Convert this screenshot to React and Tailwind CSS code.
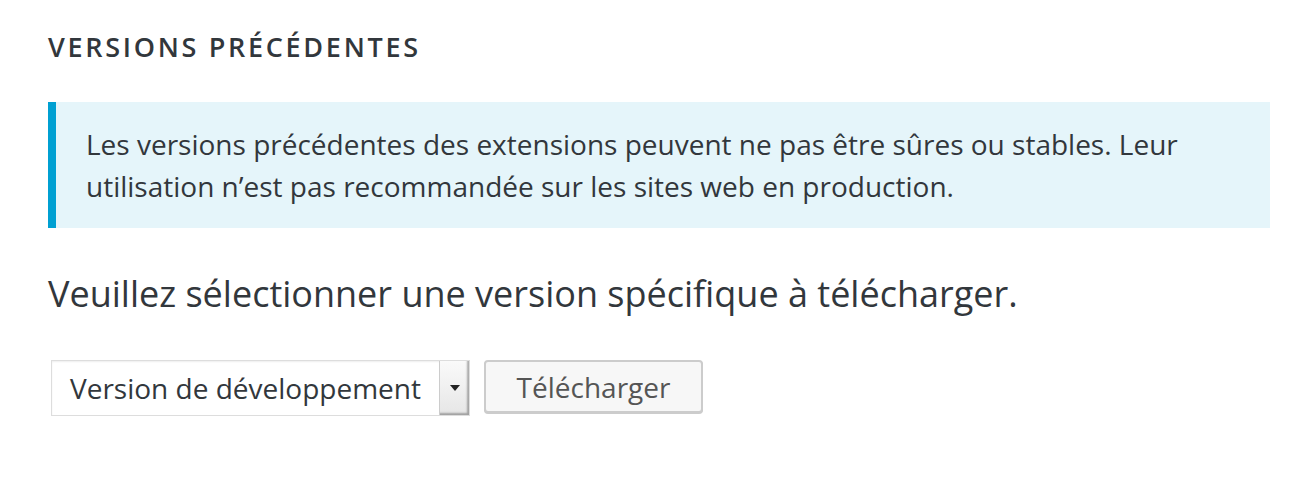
export default function App() {
  return (
    <div className="min-h-[486px] bg-white pl-12 pr-[30px] pt-[30px]" style={{ fontFamily: '"Open Sans", sans-serif' }}>
      <h2 className="text-[27px] font-semibold uppercase tracking-[0.1em] leading-[34px] text-[#32373c]">
        Versions précédentes
      </h2>

      <div className="mt-[38px] border-l-[8px] border-[#00a0d2] bg-[#e5f5fa] py-[21px] pl-[30px] pr-6">
        <p className="text-[28px] leading-[42px] text-[#32373c]">
          Les versions précédentes des extensions peuvent ne pas être sûres ou stables. Leur utilisation n’est pas recommandée sur les sites web en production.
        </p>
      </div>

      <p className="mt-[44px] text-[36px] leading-[44px] text-[#32373c]">
        Veuillez sélectionner une version spécifique à télécharger.
      </p>

      <div className="mt-[44px] flex items-start gap-[14px] pl-[3px]">
        <div className="flex h-[56px] w-[419px] items-stretch border border-[#ddd] bg-white shadow-[inset_0_1px_2px_rgba(0,0,0,0.07)]">
          <div className="flex flex-1 items-center whitespace-nowrap pl-[18px] text-[28px] text-[#32373c]">
            Version de développement
          </div>
          <div className="flex w-[30px] items-center justify-center border-l border-[#ccc] bg-gradient-to-b from-[#fafafa] to-[#e6e6e6] shadow-[inset_-2px_-2px_2px_rgba(0,0,0,0.3)]">
            <svg width="10" height="6" viewBox="0 0 10 6">
              <path d="M0 0h10L5 6z" fill="#222" />
            </svg>
          </div>
        </div>
        <button className="h-[53px] w-[219px] rounded-[4px] border-2 border-[#ccc] bg-[#f7f7f7] text-[28px] text-[#555] shadow-[0_1px_0_#ccc]">
          Télécharger
        </button>
      </div>
    </div>
  );
}
